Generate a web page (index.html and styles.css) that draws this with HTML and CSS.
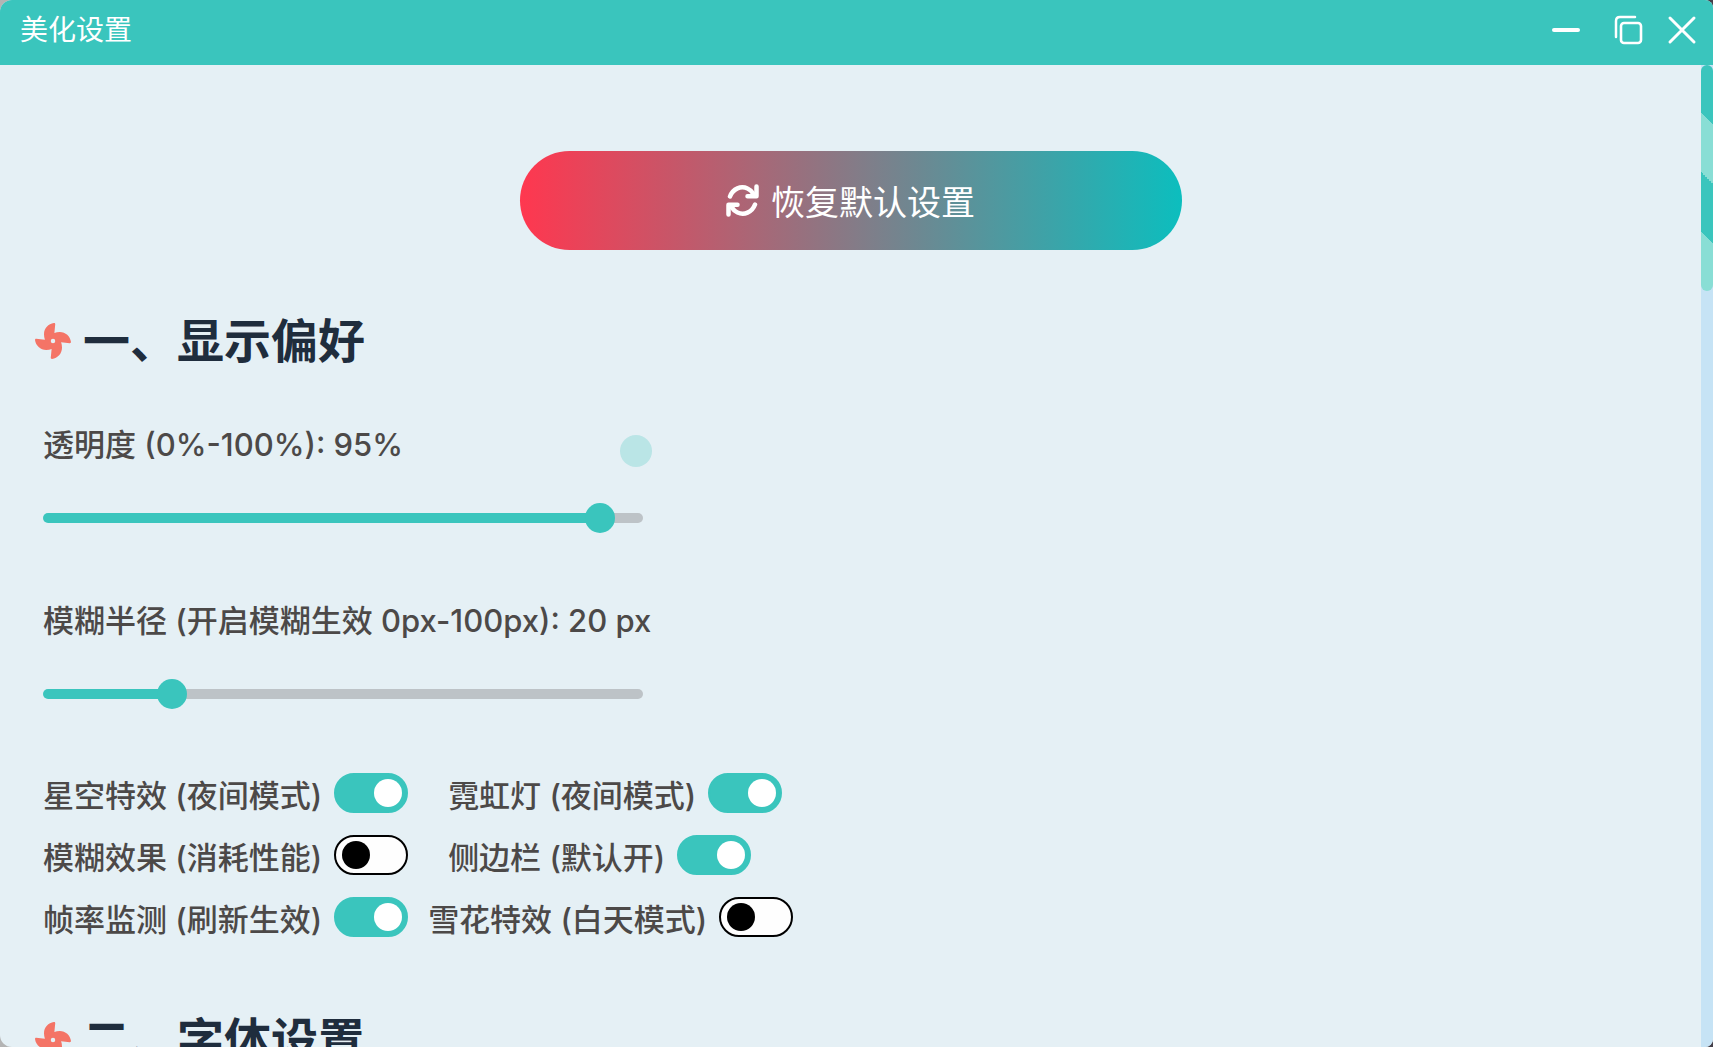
FILE: index.html
```html
<!DOCTYPE html>
<html lang="zh-CN">
<head>
<meta charset="utf-8">
<title>美化设置</title>
<link rel="stylesheet" href="styles.css">
</head>
<body>
<main class="window">
  <header class="titlebar">
    <h1 class="title">美化设置</h1>
    <div class="controls">
      <button class="control" aria-label="最小化"><svg viewBox="0 0 30 30"><path d="M3 15H27" stroke-width="4"/></svg></button>
      <button class="control" aria-label="还原"><svg viewBox="0 0 30 30"><path d="M3 22V6Q3 2 7 2H22" stroke-width="2.5"/><rect x="8" y="8" width="20" height="20" rx="3" stroke-width="2.6"/></svg></button>
      <button class="control" aria-label="关闭"><svg viewBox="0 0 30 30"><path d="M3 3L27 27M27 3L3 27" stroke-width="3"/></svg></button>
    </div>
  </header>
  <div class="body">
    <div class="content">
      <button class="reset"><svg class="reset-icon" viewBox="0 0 33 33"><path d="M4 12.5C7 4.500 15 1.500 21.500 4.500Q25 6 27.500 10"/><path d="M30.500 2.500V12.200H21.500"/><path d="M29 20.500C26 28.500 18 31.500 11.500 28.500Q8 27 5.500 23"/><path d="M2.500 30.500V20.800H11.500"/></svg>恢复默认设置</button>

      <section>
        <h2 class="heading"><svg class="fan" viewBox="0 0 512 512"><path d="M352.57 128c-28.09 0-54.09 4.52-77.06 12.86l12.41-123.11C289 7.31 279.81-1.18 269.33.13 189.63 10.13 128 77.64 128 159.43c0 28.09 4.52 54.09 12.86 77.06L17.75 224.08C7.31 223-1.18 232.19.13 242.67c10 79.7 77.51 141.33 159.3 141.33 28.09 0 54.09-4.52 77.06-12.86l-12.41 123.11c-1.05 10.43 8.11 18.93 18.59 17.62 79.7-10 141.33-77.51 141.33-159.3 0-28.09-4.52-54.09-12.86-77.06l123.11 12.41c10.44 1.05 18.93-8.11 17.62-18.59-10-79.7-77.51-141.33-159.3-141.33zM256 288a32 32 0 1 1 32-32 32 32 0 0 1-32 32z"/></svg>一、显示偏好</h2>
        <div class="settings">
          <div class="field">
            <label for="opacity">透明度 (0%-100%): 95%</label>
            <input class="slider" id="opacity" type="range" min="0" max="100" value="95" style="--value: 95%">
          </div>
          <div class="field">
            <label for="blur">模糊半径 (开启模糊生效 0px-100px): 20 px</label>
            <input class="slider" id="blur" type="range" min="0" max="100" value="20" style="--value: 20%">
          </div>
          <div class="switches">
            <div class="row wide">
              <label class="option">星空特效 (夜间模式)<input class="switch" type="checkbox" checked></label>
              <label class="option">霓虹灯 (夜间模式)<input class="switch" type="checkbox" checked></label>
            </div>
            <div class="row wide">
              <label class="option">模糊效果 (消耗性能)<input class="switch" type="checkbox"></label>
              <label class="option">侧边栏 (默认开)<input class="switch" type="checkbox" checked></label>
            </div>
            <div class="row">
              <label class="option">帧率监测 (刷新生效)<input class="switch" type="checkbox" checked></label>
              <label class="option">雪花特效 (白天模式)<input class="switch" type="checkbox"></label>
            </div>
          </div>
        </div>
      </section>

      <section>
        <h2 class="heading"><svg class="fan" viewBox="0 0 512 512"><path d="M352.57 128c-28.09 0-54.09 4.52-77.06 12.86l12.41-123.11C289 7.31 279.81-1.18 269.33.13 189.63 10.13 128 77.64 128 159.43c0 28.09 4.52 54.09 12.86 77.06L17.75 224.08C7.31 223-1.18 232.19.13 242.67c10 79.7 77.51 141.33 159.3 141.33 28.09 0 54.09-4.52 77.06-12.86l-12.41 123.11c-1.05 10.43 8.11 18.93 18.59 17.62 79.7-10 141.33-77.51 141.33-159.3 0-28.09-4.52-54.09-12.86-77.06l123.11 12.41c10.44 1.05 18.93-8.11 17.62-18.59-10-79.7-77.51-141.33-159.3-141.33zM256 288a32 32 0 1 1 32-32 32 32 0 0 1-32 32z"/></svg>二、字体设置</h2>
      </section>
    </div>
    <div class="scrollbar"><div class="thumb"></div></div>
  </div>
  <div class="pointer"></div>
</main>
</body>
</html>
```
FILE: styles.css
```css
* {
  box-sizing: border-box;
}

body {
  margin: 0;
  background: linear-gradient(90deg, #b4b4b4, #44404a);
  color: #4c4948;
  font-family: Inter, "Noto Sans CJK SC", sans-serif;
  font-size: 31px;
  font-weight: 500;
}

.window {
  position: relative;
  display: flex;
  flex-direction: column;
  height: 100vh;
  overflow: hidden;
  border-radius: 12px 8px 8px 12px;
  background: #e5f0f5;
}

.titlebar {
  display: flex;
  flex: none;
  align-items: center;
  justify-content: space-between;
  height: 65px;
  padding: 0 16px 6px 20px;
  background: #3ac5bd;
  color: #fff;
}

.title {
  margin: 0;
  font-size: 28px;
  font-weight: 400;
  line-height: 40px;
}

.controls {
  display: flex;
  gap: 24px;
}

.control {
  width: 30px;
  height: 30px;
  padding: 0;
  border: 0;
  background: none;
}

.control:first-child {
  margin-right: 8px;
}

.control svg {
  display: block;
  fill: none;
  stroke: #fff;
  stroke-linecap: round;
}

.body {
  display: flex;
  flex: 1;
  min-height: 0;
}

.content {
  flex: 1;
  padding: 86px 35px 0;
  overflow: hidden;
}

.reset {
  display: flex;
  align-items: center;
  justify-content: center;
  gap: 12px;
  width: 662px;
  height: 99px;
  margin: 0 auto 61px;
  padding: 0;
  border: 0;
  border-radius: 50px;
  background: linear-gradient(90deg, #ff374f, #0cbebe);
  color: #fff;
  font-family: inherit;
  font-size: 34px;
  font-weight: 400;
}

.reset-icon {
  width: 33px;
  height: 33px;
  fill: none;
  stroke: #fff;
  stroke-width: 4.5;
  stroke-linecap: round;
  stroke-linejoin: round;
}

.heading {
  display: flex;
  align-items: center;
  gap: 12px;
  margin: 0;
  color: #1f2d3d;
  font-size: 47px;
  font-weight: 700;
  line-height: 60px;
}

.fan {
  width: 36px;
  height: 36px;
  fill: #f47466;
}

.settings {
  padding: 54px 8px 73px;
}

.field {
  margin-bottom: 68px;
  line-height: 40px;
}

.field label {
  display: block;
  margin-bottom: 38px;
}

.slider {
  display: block;
  width: 600px;
  height: 30px;
  margin: 0;
  appearance: none;
  background: none;
}

.slider::-webkit-slider-runnable-track {
  height: 10px;
  border-radius: 5px;
  background: linear-gradient(90deg, #3ac5bd var(--value), #bdc3c7 var(--value));
}

.slider::-webkit-slider-thumb {
  width: 30px;
  height: 30px;
  margin-top: -10px;
  border-radius: 50%;
  appearance: none;
  background: #3ac5bd;
}

.switches {
  display: grid;
  gap: 22px;
  margin-top: -4px;
}

.row {
  display: flex;
  gap: 20px;
}

.row.wide {
  gap: 40px;
}

.option {
  display: flex;
  align-items: flex-start;
  gap: 12px;
  height: 40px;
  line-height: 46px;
}

.switch {
  display: flex;
  align-items: center;
  width: 74px;
  height: 40px;
  margin: 0;
  padding: 0 6px;
  border: 2px solid #000;
  border-radius: 20px;
  appearance: none;
  background: #fefefe;
}

.switch::before {
  width: 28px;
  height: 28px;
  border-radius: 50%;
  background: #000;
  content: "";
}

.switch:checked {
  justify-content: flex-end;
  padding: 0 4px;
  border-color: #3ac5bd;
  background: #3ac5bd;
}

.switch:checked::before {
  background: #fff;
}

.scrollbar {
  flex: none;
  width: 12px;
  background: #c6e3f5;
}

.thumb {
  height: 226px;
  border-radius: 6px;
  background: linear-gradient(45deg, #89ded5 25%, #3ac5bd 25% 50%, #89ded5 50% 75%, #3ac5bd 75%);
}

.pointer {
  position: absolute;
  top: 435px;
  left: 620px;
  width: 32px;
  height: 32px;
  border-radius: 50%;
  background: #3ac5bd;
  opacity: 0.25;
}
```
